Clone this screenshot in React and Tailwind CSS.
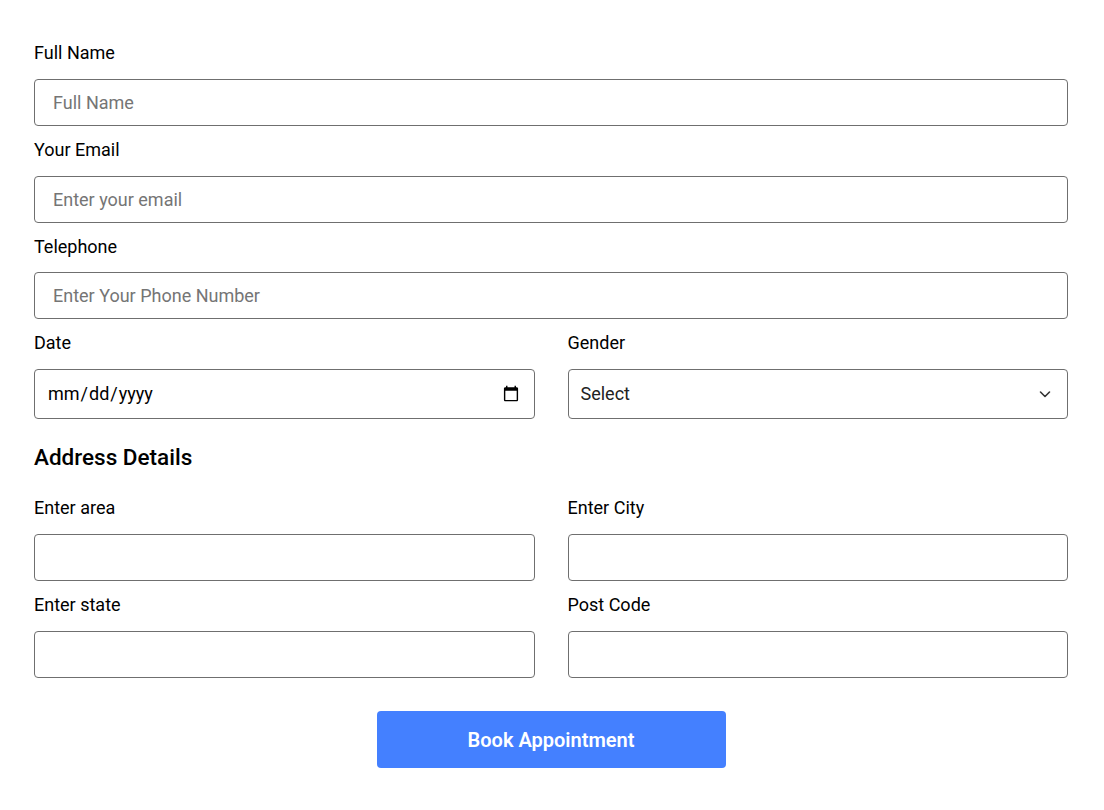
export default function App() {
  const label = "block text-[18px] leading-6 text-black mb-[13.67px]";
  const input =
    "block w-full h-[47px] rounded border border-[#6f6f6f] bg-white px-[18px] text-[18px] text-black placeholder:text-[#757575] outline-none";

  return (
    <div
      className="min-h-screen bg-white pl-[34px] pr-[36px] pt-[41.33px] pb-10"
      style={{ fontFamily: "Roboto, 'Liberation Sans', sans-serif" }}
    >
      <form className="w-full">
        <div className="mb-3">
          <label className={label}>Full Name</label>
          <input type="text" placeholder="Full Name" className={input} />
        </div>
        <div className="mb-3">
          <label className={label}>Your Email</label>
          <input type="email" placeholder="Enter your email" className={input} />
        </div>
        <div className="mb-3">
          <label className={label}>Telephone</label>
          <input type="tel" placeholder="Enter Your Phone Number" className={input} />
        </div>

        <div className="grid grid-cols-2 gap-x-[33px]">
          <div>
            <label className={label}>Date</label>
            <input
              type="date"
              className="block w-full h-[50px] rounded border border-[#6f6f6f] bg-white px-3 text-[18px] text-black outline-none"
            />
          </div>
          <div>
            <label className={label}>Gender</label>
            <div className="relative">
              <select
                defaultValue=""
                className="block w-full h-[50px] appearance-none rounded border border-[#6f6f6f] bg-white pl-3 pr-10 text-[18px] text-[#222] outline-none"
              >
                <option value="">Select</option>
                <option value="male">Male</option>
                <option value="female">Female</option>
              </select>
              <svg
                className="pointer-events-none absolute right-[17px] top-1/2 h-3 w-3 -translate-y-1/2 text-[#333]"
                viewBox="0 0 12 12"
                fill="none"
                stroke="currentColor"
                strokeWidth="1.6"
                strokeLinecap="round"
                strokeLinejoin="round"
              >
                <path d="M1.5 4l4.5 4.5L10.5 4" />
              </svg>
            </div>
          </div>
        </div>

        <h2 className="mt-[23px] mb-6 text-[22.5px] leading-[30px] font-medium text-black">
          Address Details
        </h2>

        <div className="grid grid-cols-2 gap-x-[33px] gap-y-[12.5px]">
          <div>
            <label className={label}>Enter area</label>
            <input type="text" className={input} />
          </div>
          <div>
            <label className={label}>Enter City</label>
            <input type="text" className={input} />
          </div>
          <div>
            <label className={label}>Enter state</label>
            <input type="text" className={input} />
          </div>
          <div>
            <label className={label}>Post Code</label>
            <input type="text" className={input} />
          </div>
        </div>

        <div className="mt-[33.5px] flex justify-center">
          <button
            type="button"
            className="h-[57px] w-[349px] rounded bg-[#4480ff] text-[20px] font-semibold text-white"
          >
            Book Appointment
          </button>
        </div>
      </form>
    </div>
  );
}
